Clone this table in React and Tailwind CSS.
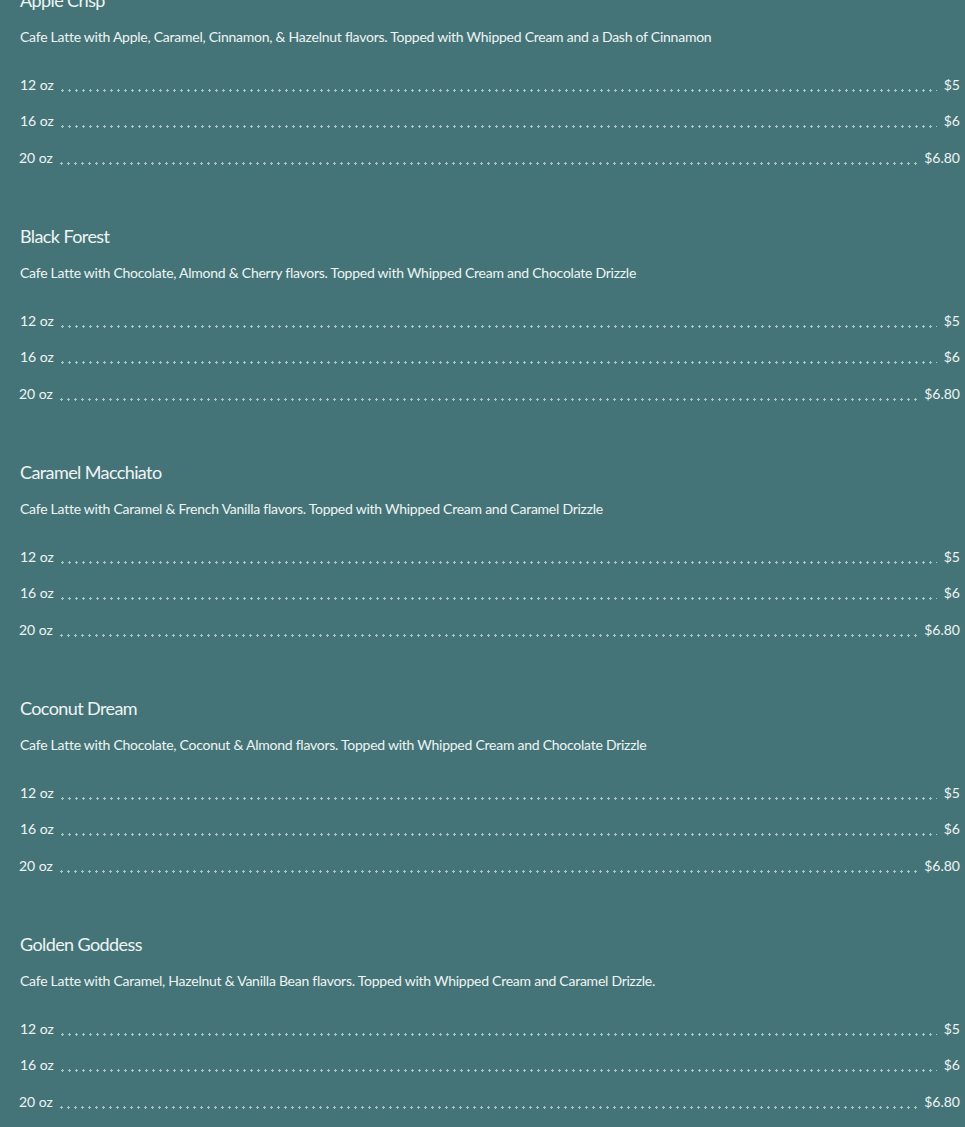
const items = [
  { name: "Apple Crisp", desc: "Cafe Latte with Apple, Caramel, Cinnamon, & Hazelnut flavors. Topped with Whipped Cream and a Dash of Cinnamon" },
  { name: "Black Forest", desc: "Cafe Latte with Chocolate, Almond & Cherry flavors. Topped with Whipped Cream and Chocolate Drizzle" },
  { name: "Caramel Macchiato", desc: "Cafe Latte with Caramel & French Vanilla flavors. Topped with Whipped Cream and Caramel Drizzle" },
  { name: "Coconut Dream", desc: "Cafe Latte with Chocolate, Coconut & Almond flavors. Topped with Whipped Cream and Chocolate Drizzle" },
  { name: "Golden Goddess", desc: "Cafe Latte with Caramel, Hazelnut & Vanilla Bean flavors. Topped with Whipped Cream and Caramel Drizzle." },
];

const sizes = [
  { size: "12 oz", price: "$5" },
  { size: "16 oz", price: "$6" },
  { size: "20 oz", price: "$6.80" },
];

function Row({ size, price, last }) {
  return (
    <div className={`flex items-end h-5 ${last ? "mt-px" : ""}`}>
      <span className={`text-[14px] leading-5 ${last ? "-ml-px" : ""}`}>{size}</span>
      <div className="flex-1 h-[3px] mb-[3px] ml-[5px] mr-[7px] bg-[radial-gradient(circle,#a9c6c7_1px,transparent_1.4px)] bg-[length:7px_3px] bg-repeat-x" />
      <span className="text-[14px] leading-5">{price}</span>
    </div>
  );
}

export default function App() {
  return (
    <div
      className="h-[1127px] w-full overflow-hidden bg-[#457478] text-[#eef4f4]"
      style={{ fontFamily: "Lato, 'Open Sans', sans-serif" }}
    >
      <div className="-mt-3 pl-5 pr-[5px]">
        {items.map((it) => (
          <section key={it.name} className="h-[236px]">
            <h2 className="text-[18px] leading-6 font-normal tracking-[-0.6px]">{it.name}</h2>
            <p className="mt-[15px] text-[14px] leading-5 tracking-[-0.25px]">{it.desc}</p>
            <div className="mt-[28px] flex flex-col gap-4">
              {sizes.map((s, i) => (
                <Row key={s.size} {...s} last={i === 2} />
              ))}
            </div>
          </section>
        ))}
      </div>
    </div>
  );
}
